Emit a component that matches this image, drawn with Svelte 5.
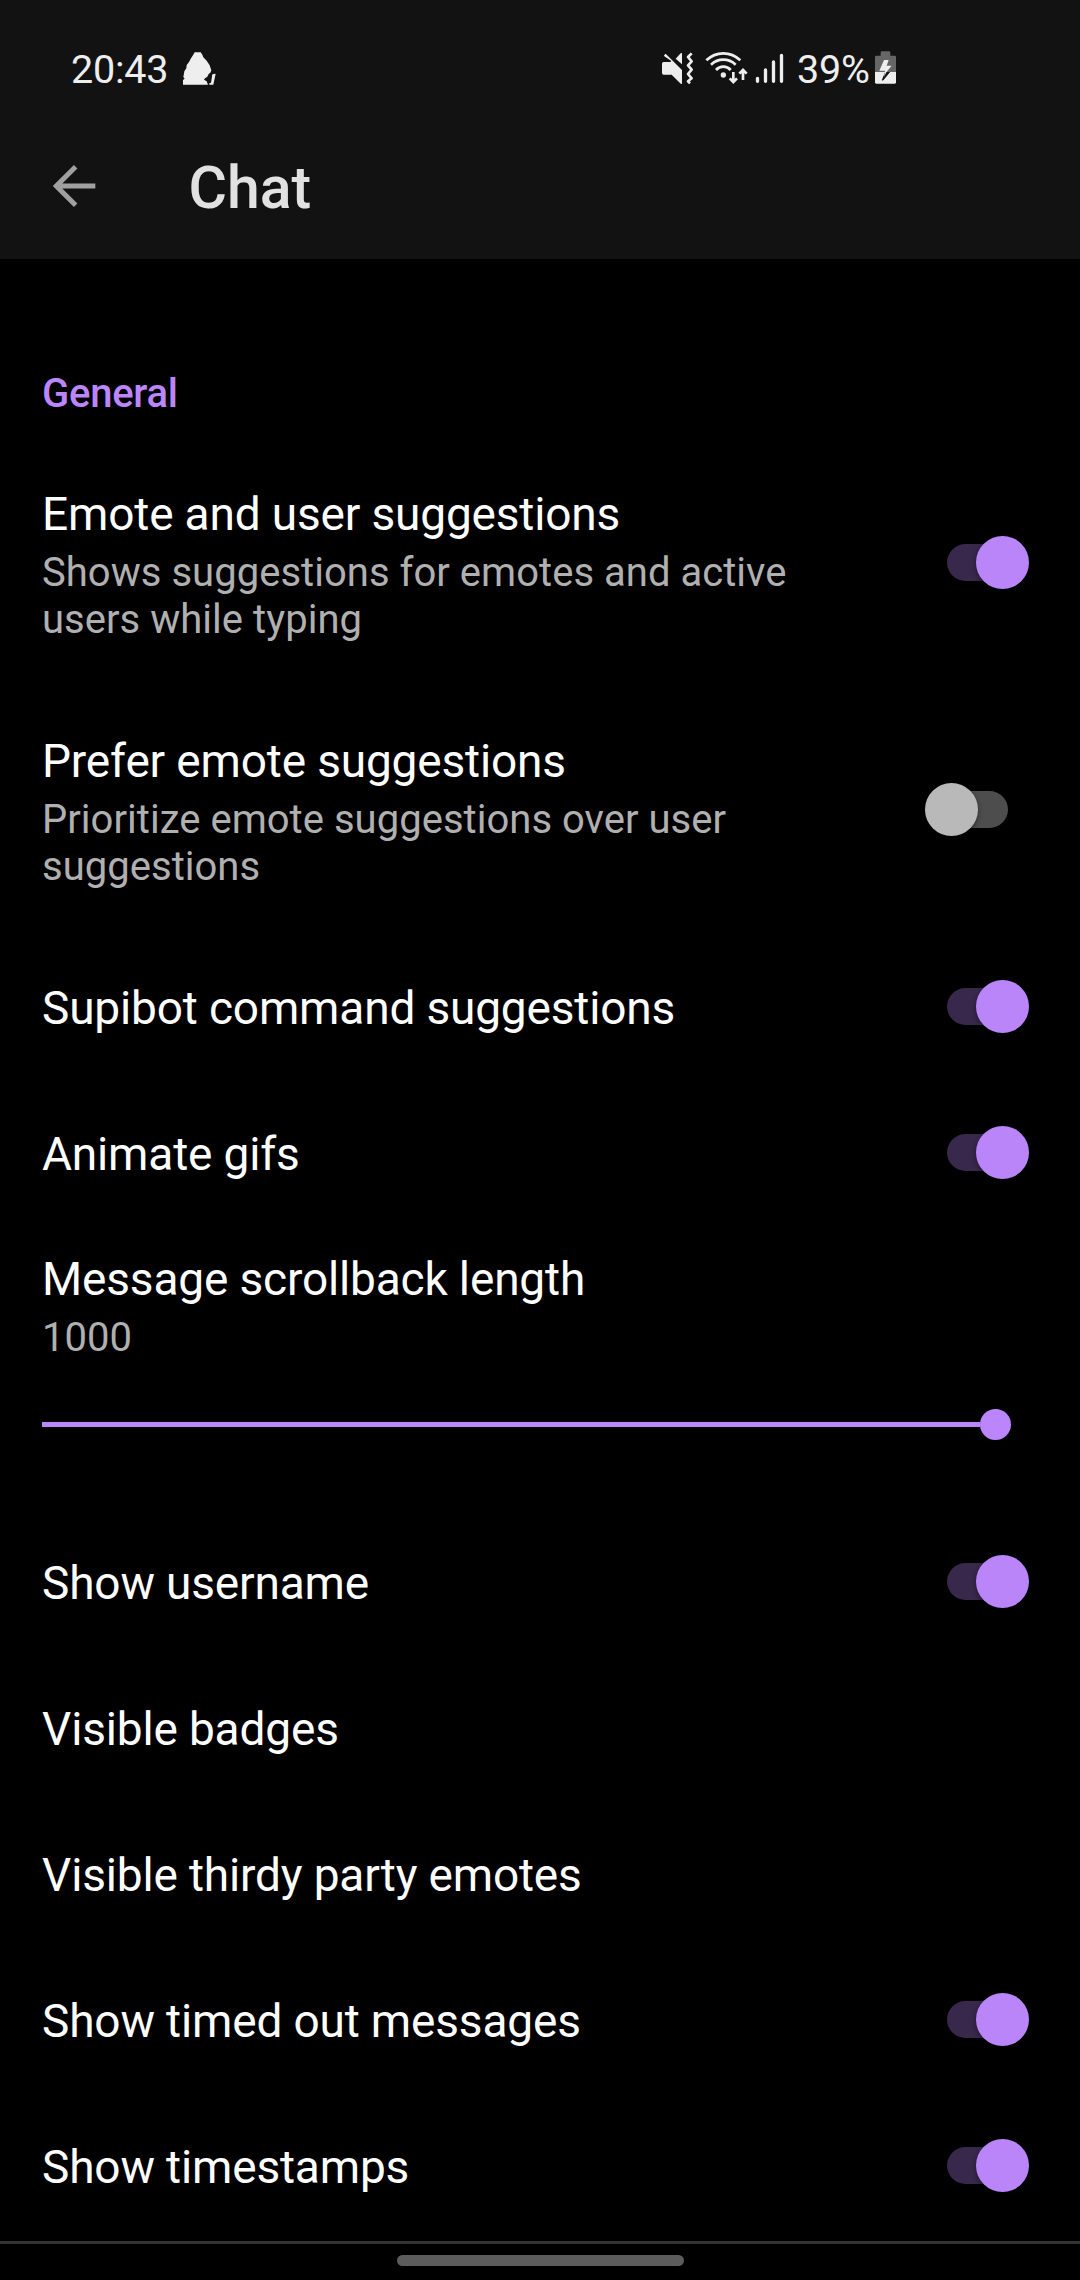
<script>
  const before = [
    { title: 'Emote and user suggestions', lines: ['Shows suggestions for emotes and active', 'users while typing'], on: true },
    { title: 'Prefer emote suggestions', lines: ['Prioritize emote suggestions over user', 'suggestions'], on: false },
    { title: 'Supibot command suggestions', on: true },
    { title: 'Animate gifs', on: true }
  ];
  const after = [
    { title: 'Show username', on: true },
    { title: 'Visible badges' },
    { title: 'Visible thirdy party emotes' },
    { title: 'Show timed out messages', on: true },
    { title: 'Show timestamps', on: true }
  ];
  const scrollback = { value: 1000, max: 1000 };
</script>

{#snippet row(item)}
  <div class="row">
    <div class="copy">
      <div class="title">{item.title}</div>
      {#if item.lines}
        <div class="summary">
          {#each item.lines as line}<div>{line}</div>{/each}
        </div>
      {/if}
    </div>
    {#if item.on !== undefined}
      <div class="switch" class:on={item.on} role="switch" aria-checked={item.on} aria-label={item.title} tabindex="0">
        <div class="thumb"></div>
      </div>
    {/if}
  </div>
{/snippet}

<div class="screen">
  <header>
    <div class="status">
      <span class="time">20:43</span>
      <svg class="app" viewBox="426 60 105 105" width="35" height="35">
        <path fill="#eee" d="M464 67H482L487 74L490 82L500 92L509 106L514 121L511 128L506 132L502 140L495 145L492 149L500 154L504 164H429V150L434 146L430 141L433 124L439 115L440 105L447 96L453 85L458 77Z" />
        <path fill="#eee" d="M517 133L527 131L520 164H508V160L513 158Z" />
      </svg>
      <div class="indicators">
        <svg viewBox="66 60 96 105" width="32" height="35">
          <path fill="#eee" d="M71 96H91L94 93L73 79L72 76L77 71L126 120V161L123 162L95 134H71Q66 134 66 129V101Q66 96 71 96Z" />
          <path fill="#eee" d="M126 69V103L107 86L122 70Z" />
          <path d="M155 70L144 81L155 94L144 106L155 119L144 132L155 145L144 154L150 160" fill="none" stroke="#eee" stroke-width="8" stroke-linejoin="round" />
        </svg>
        <svg class="wifi" viewBox="195 60 129 105" width="43" height="35">
          <g fill="none" stroke="#eee" stroke-width="8">
            <path d="M199 91Q221 70 250 70Q279 70 301 91" />
            <path d="M213 104Q229 89 250 89Q271 89 287 104" />
            <path d="M228 120Q237 110 250 110Q263 110 272 120" />
            <path d="M280 126V156M269 145L280 156L291 145" />
            <path d="M309 150V120M298 131L309 120L320 131" />
          </g>
          <circle cx="250" cy="135" r="8" fill="#eee" />
        </svg>
        <svg class="signal" viewBox="345 60 87 105" width="29" height="35">
          <path d="M352.500 145V154M376.500 120V154M400.500 96V154M424.500 76V154" fill="none" stroke="#eee" stroke-width="10" stroke-linecap="round" />
        </svg>
        <span class="percent">39%</span>
        <svg viewBox="702 60 69 105" width="23" height="35">
          <path fill="#666" d="M722 68Q722 64 726 64H747Q751 64 751 68V77H764Q768 77 768 81V126H705V81Q705 77 709 77H722Z" />
          <path fill="#eee" d="M705 126H768V157Q768 161 764 161H709Q705 161 705 157Z" />
          <path fill="#666" d="M738 124L725 151L729 152L755 120Z" />
          <path fill="#111" d="M735 126L726 151L730 150L750 126Z" />
          <path fill="#eee" d="M732 90H746L740 107H755L739 127L732 141L735 122H718Z" />
        </svg>
      </div>
    </div>
    <div class="toolbar">
      <svg viewBox="38 400 129 132" width="43" height="44" role="img" aria-label="Back">
        <path d="M165 466H50M106 408L48 466L106 524" fill="none" stroke="#a0a0a0" stroke-width="15" />
      </svg>
      <h1>Chat</h1>
    </div>
  </header>

  <main>
    <h2>General</h2>
    {#each before as item}{@render row(item)}{/each}
    <div class="seek">
      <div class="title">Message scrollback length</div>
      <div class="summary">{scrollback.value}</div>
      <div class="slider">
        <div class="track" style:width="{(scrollback.value / scrollback.max) * 100}%"></div>
        <div class="knob"></div>
      </div>
    </div>
    {#each after as item}{@render row(item)}{/each}
  </main>

  <footer><div class="pill"></div></footer>
</div>

<style>
  :global(body) {
    background: #000;
  }
  .screen {
    display: flex;
    flex-direction: column;
    width: 1080px;
    height: 2280px;
    overflow: hidden;
    background: #000;
    color: #fff;
    font-family: Roboto, sans-serif;
  }
  svg {
    display: block;
    flex: none;
  }
  header {
    box-sizing: border-box;
    flex: none;
    height: 259px;
    padding-top: 50px;
    background: #121212;
  }
  .status {
    display: flex;
    height: 35px;
    padding: 0 183px 0 71px;
    color: #eee;
    font-size: 39.5px;
    line-height: 39px;
    white-space: nowrap;
  }
  .time {
    width: 111px;
    letter-spacing: -0.2px;
  }
  .indicators {
    display: flex;
    margin-left: auto;
  }
  .wifi {
    margin-left: 11px;
  }
  .signal {
    margin-left: 7px;
  }
  .percent {
    width: 77px;
    margin-left: 13px;
    letter-spacing: -0.2px;
  }
  .toolbar {
    display: flex;
    align-items: center;
    gap: 93px;
    height: 147px;
    margin-top: 27px;
    padding-left: 52.500px;
  }
  h1 {
    margin: 5px 0 0;
    color: #e1e1e1;
    font-size: 59px;
    font-weight: 500;
    line-height: 68px;
  }
  main {
    flex: none;
    height: 1982px;
  }
  h2 {
    box-sizing: border-box;
    height: 180px;
    margin: 0;
    padding: 111px 42px 0;
    color: #bb86fc;
    font-size: 40px;
    font-weight: 500;
    line-height: 47px;
    letter-spacing: -0.25px;
  }
  .row {
    display: flex;
    align-items: center;
    justify-content: space-between;
    padding: 0 52px 0 42px;
  }
  .copy {
    padding: 48px 0 44px;
  }
  .title {
    font-size: 46px;
    line-height: 54px;
    letter-spacing: -0.16px;
    white-space: nowrap;
  }
  .summary {
    padding-top: 8px;
    margin-bottom: -1px;
    color: #b0b0b0;
    font-size: 40px;
    line-height: 47px;
    letter-spacing: 0.03px;
    white-space: nowrap;
  }
  .switch {
    display: flex;
    align-items: center;
    box-sizing: border-box;
    width: 61.5px;
    height: 37px;
    margin-right: 20px;
    border-radius: 19px;
    background: #4d4d4d;
  }
  .switch .thumb {
    flex: none;
    width: 53px;
    height: 53px;
    margin-left: -21.5px;
    border-radius: 50%;
    background: #b9b9b9;
    box-shadow: 0 2px 5px rgba(0, 0, 0, 0.4);
  }
  .switch.on {
    background: #38284c;
  }
  .switch.on .thumb {
    margin-left: 29.5px;
    background: #b985f9;
  }
  .seek {
    box-sizing: border-box;
    height: 283px;
    padding: 27px 69px 0 42px;
  }
  .slider {
    display: flex;
    align-items: center;
    height: 31px;
    margin-top: 49px;
  }
  .track {
    height: 5px;
    background: #bb86fc;
  }
  .knob {
    flex: none;
    width: 31px;
    height: 31px;
    border-radius: 50%;
    background: #bb86fc;
  }
  footer {
    display: flex;
    justify-content: center;
    box-sizing: border-box;
    height: 39px;
    padding-top: 11px;
    border-top: 3px solid #333;
  }
  .pill {
    width: 287px;
    height: 11px;
    border-radius: 6px;
    background: #5c5c5c;
  }
</style>
